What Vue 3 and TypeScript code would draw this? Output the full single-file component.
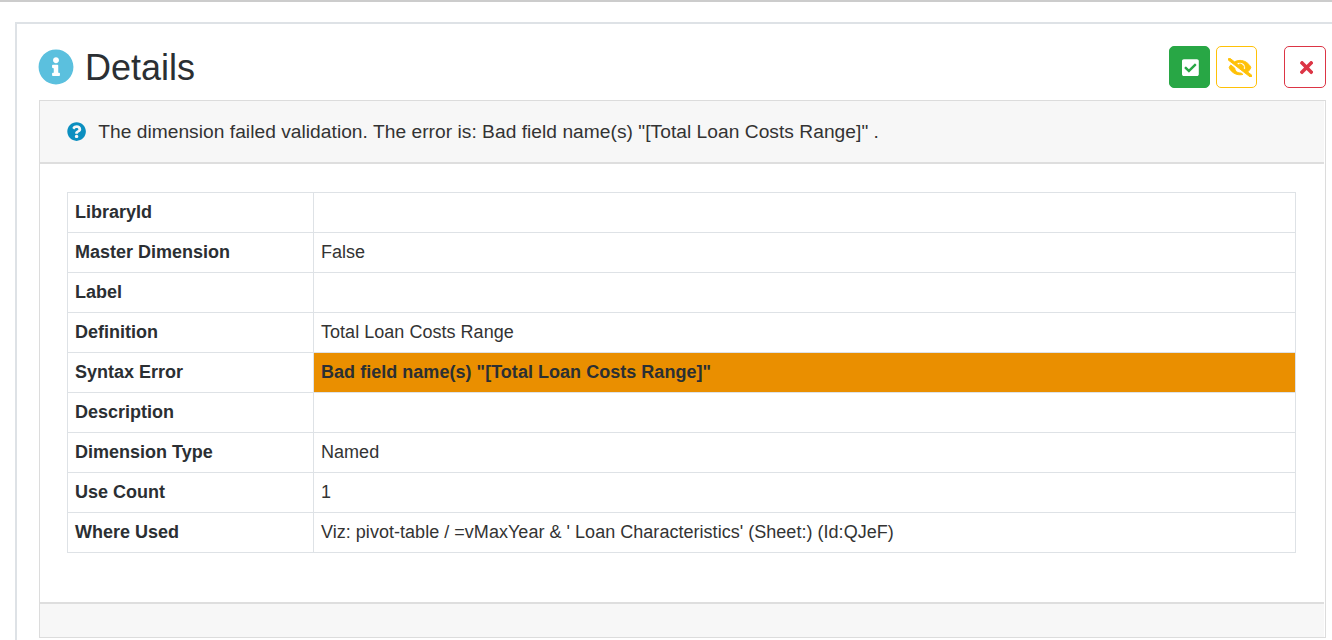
<script setup lang="ts">
const rows: { label: string; value: string; error?: boolean }[] = [
  { label: 'LibraryId', value: '' },
  { label: 'Master Dimension', value: 'False' },
  { label: 'Label', value: '' },
  { label: 'Definition', value: 'Total Loan Costs Range' },
  { label: 'Syntax Error', value: 'Bad field name(s) "[Total Loan Costs Range]"', error: true },
  { label: 'Description', value: '' },
  { label: 'Dimension Type', value: 'Named' },
  { label: 'Use Count', value: '1' },
  { label: 'Where Used', value: "Viz: pivot-table / =vMaxYear & ' Loan Characteristics' (Sheet:) (Id:QJeF)" }
]
</script>

<template>
  <div class="page">
    <div class="outer">
      <div class="title-row">
        <h1 class="title">
          <svg class="title-icon" viewBox="0 0 512 512">
            <path fill="#5bc0de" d="M256 8C119.043 8 8 119.083 8 256c0 136.997 111.043 248 248 248s248-111.003 248-248C504 119.083 392.957 8 256 8zm0 110c23.196 0 42 18.804 42 42s-18.804 42-42 42-42-18.804-42-42 18.804-42 42-42zm56 254c0 6.627-5.373 12-12 12h-88c-6.627 0-12-5.373-12-12v-24c0-6.627 5.373-12 12-12h12v-64h-12c-6.627 0-12-5.373-12-12v-24c0-6.627 5.373-12 12-12h64c6.627 0 12 5.373 12 12v100h12c6.627 0 12 5.373 12 12v24z" />
          </svg>
          Details
        </h1>
        <div class="actions">
          <button class="btn btn-green">
            <svg width="16.8" height="19.2" viewBox="0 0 448 512">
              <path fill="#fff" d="M400 480H48c-26.51 0-48-21.49-48-48V80c0-26.51 21.49-48 48-48h352c26.51 0 48 21.49 48 48v352c0 26.51-21.49 48-48 48zm-204.686-98.059l184-184c6.248-6.248 6.248-16.379 0-22.627l-22.627-22.627c-6.248-6.248-16.379-6.249-22.628 0L184 302.745l-70.059-70.059c-6.248-6.248-16.379-6.248-22.628 0l-22.627 22.627c-6.248 6.248-6.248 16.379 0 22.627l104 104c6.249 6.25 16.379 6.25 22.628.001z" />
            </svg>
          </button>
          <button class="btn btn-yellow">
            <svg width="24" height="19.2" viewBox="0 0 640 512">
              <path fill="#ffc107" stroke="#ffc107" stroke-width="26" d="M320 400c-75.85 0-137.25-58.71-142.9-133.11L72.2 185.82c-13.79 17.3-26.48 35.59-36.72 55.59a32.35 32.35 0 0 0 0 29.19C89.71 376.41 197.07 448 320 448c26.91 0 52.87-4 77.89-10.46L346 397.39a144.13 144.13 0 0 1-26 2.61zm313.82 58.1l-110.55-85.44a331.25 331.25 0 0 0 81.25-102.07 32.35 32.35 0 0 0 0-29.19C550.29 135.59 442.93 64 320 64a308.15 308.15 0 0 0-147.32 37.7L45.46 3.37A16 16 0 0 0 23 6.18L3.37 31.45A16 16 0 0 0 6.18 53.9l588.36 454.73a16 16 0 0 0 22.46-2.81l19.64-25.27a16 16 0 0 0-2.82-22.45zm-183.72-142l-39.3-30.38A94.75 94.75 0 0 0 416 256a94.76 94.76 0 0 0-121.31-92.21A47.65 47.65 0 0 1 304 192a46.64 46.64 0 0 1-1.54 10l-73.61-56.89A142.31 142.31 0 0 1 320 112a143.92 143.92 0 0 1 144 144c0 21.63-5.29 41.79-13.9 60.11z" />
            </svg>
          </button>
          <button class="btn btn-red">
            <svg width="13.2" height="19.2" viewBox="0 0 352 512">
              <path fill="#dc3545" d="M242.72 256l100.07-100.07c12.28-12.28 12.28-32.19 0-44.48l-22.24-22.24c-12.28-12.28-32.19-12.28-44.48 0L176 189.28 75.93 89.21c-12.28-12.28-32.19-12.28-44.48 0L9.21 111.45c-12.28 12.28-12.28 32.19 0 44.48L109.28 256 9.21 356.07c-12.28 12.28-12.28 32.19 0 44.48l22.24 22.24c12.28 12.28 32.2 12.28 44.48 0L176 322.72l100.07 100.07c12.28 12.28 32.2 12.28 44.48 0l22.24-22.24c12.28-12.28 12.28-32.19 0-44.48L242.72 256z" />
            </svg>
          </button>
        </div>
      </div>

      <div class="panel">
        <div class="panel-header">
          <svg class="help-icon" viewBox="0 0 512 512">
            <path fill="#0c8fc0" d="M504 256c0 136.997-111.043 248-248 248S8 392.997 8 256C8 119.083 119.043 8 256 8s248 111.083 248 248zM262.655 90c-54.497 0-89.255 22.957-116.549 63.758-3.536 5.286-2.353 12.415 2.715 16.258l34.699 26.31c5.205 3.947 12.621 3.008 16.665-2.122 17.864-22.658 30.113-35.797 57.303-35.797 20.429 0 45.698 13.148 45.698 32.958 0 14.976-12.363 22.667-32.534 33.976C247.128 238.528 216 254.941 216 296v4c0 6.627 5.373 12 12 12h56c6.627 0 12-5.373 12-12v-1.333c0-28.462 83.186-29.647 83.186-106.667 0-58.002-60.165-102-116.531-102zM256 338c-25.365 0-46 20.635-46 46 0 25.364 20.635 46 46 46s46-20.636 46-46c0-25.365-20.635-46-46-46z" />
          </svg>
          <span>The dimension failed validation. The error is: Bad field name(s) "[Total Loan Costs Range]" .</span>
        </div>
        <div class="panel-body">
          <table class="details">
            <tbody>
              <tr v-for="row in rows" :key="row.label">
                <th>{{ row.label }}</th>
                <td :class="{ error: row.error }">{{ row.value }}</td>
              </tr>
            </tbody>
          </table>
        </div>
        <div class="panel-footer"></div>
      </div>
    </div>
  </div>
</template>

<style>
html,
body {
  margin: 0;
  overflow: hidden;
}
</style>

<style scoped>
.page {
  box-sizing: border-box;
  height: 640px;
  overflow: hidden;
  border-top: 2px solid #ccc;
  padding: 20px 0 0 15px;
  font-family: "Liberation Sans", Arial, sans-serif;
  font-size: 18px;
  color: #2b2f33;
  background: #fff;
}

.outer {
  box-sizing: border-box;
  width: 1340px;
  min-height: 640px;
  border-top: 2px solid #dee2e6;
  border-left: 2px solid #dee2e6;
  padding: 21px 0 0 22px;
}

.title-row {
  display: flex;
  justify-content: space-between;
  align-items: flex-start;
  width: 1287px;
  height: 55px;
}

.title {
  display: flex;
  align-items: center;
  gap: 11px;
  margin: -1px 0 0;
  font-size: 36px;
  font-weight: 400;
  line-height: 47px;
}

.title-icon {
  width: 36px;
  height: 36px;
  margin: -2px 0 0 -1px;
}

.actions {
  display: flex;
  margin-top: 1px;
}

.btn {
  display: flex;
  align-items: center;
  justify-content: center;
  box-sizing: border-box;
  width: 41px;
  height: 42px;
  padding: 1px 0 0;
  border: 1px solid;
  border-radius: 5px;
  background: #fff;
}

.btn-green {
  padding-left: 2px;
  border-color: #28a745;
  background: #28a745;
}

.btn-yellow {
  margin-left: 6px;
  padding-left: 6px;
  border-color: #ffc107;
}

.btn-red {
  width: 42px;
  margin-left: 27px;
  padding: 2px 0 0 3px;
  border-color: #dc3545;
}

.panel {
  box-sizing: border-box;
  width: 1287px;
  border: 1px solid #dcdcdc;
}

.panel-header {
  display: flex;
  align-items: center;
  gap: 12px;
  box-sizing: border-box;
  height: 63px;
  margin-right: 1px;
  padding-left: 27px;
  font-size: 19.2px;
  letter-spacing: 0.03px;
  color: #333;
  background: #f7f7f7;
  border-bottom: 2px solid #dedede;
}

.help-icon {
  width: 19.2px;
  height: 19.2px;
}

.panel-body {
  padding: 28px 27px 49px;
}

.details {
  width: 1229px;
  table-layout: fixed;
  border-collapse: collapse;
}

.details th,
.details td {
  box-sizing: border-box;
  height: 40px;
  padding: 6px 7px;
  border: 1px solid #dee2e6;
  line-height: 27px;
  text-align: left;
}

.details th {
  width: 246px;
  font-weight: 700;
}

.details td {
  font-weight: 400;
  letter-spacing: 0.03px;
  color: #333;
}

.details td.error {
  background: #ea8f00;
  font-weight: 700;
  color: #2b2f33;
}

.panel-footer {
  box-sizing: border-box;
  height: 35px;
  margin-right: 1px;
  background: #f7f7f7;
  border-top: 2px solid #dedede;
}
</style>
